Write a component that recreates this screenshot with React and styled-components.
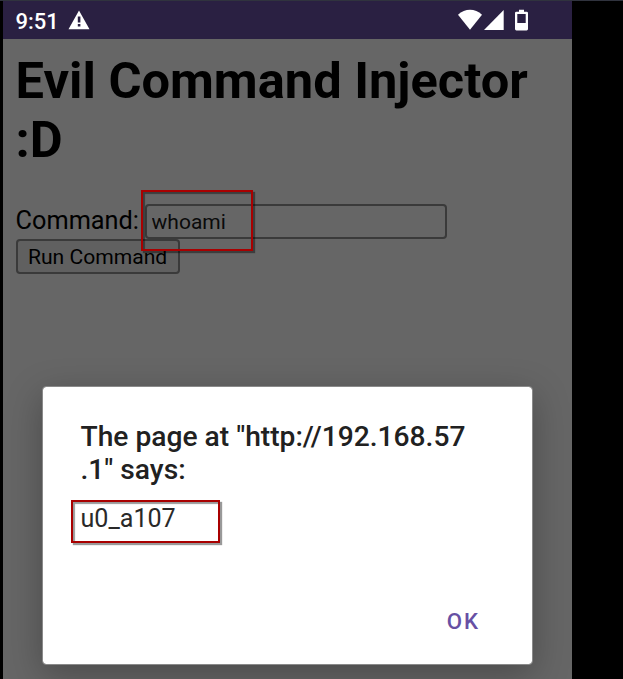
import React from "react";
import styled, { createGlobalStyle } from "styled-components";

const GlobalStyle = createGlobalStyle`
  *, *::before, *::after { box-sizing: border-box; }
  body { margin: 0; background: #000; font-family: Roboto, sans-serif; }
`;

const Screen = styled.div`
  width: 623px;
  height: 679px;
  padding-left: 3px;
  border-top: 1px solid #30333e;
  background: #000;
  overflow: hidden;
`;

const Device = styled.main`
  position: relative;
  width: 569px;
  height: 678px;
  display: flex;
  flex-direction: column;
  background: #666;
  overflow: hidden;
`;

const StatusBar = styled.header`
  height: 38px;
  flex: none;
  display: flex;
  align-items: center;
  padding: 0 44px 0 12.5px;
  background: #2a2042;
  color: #fff;
`;

const Clock = styled.time`
  font-size: 22px;
  font-weight: 500;
  line-height: 36px;
  padding-top: 3px;
  width: 52.5px;
  white-space: nowrap;
`;

const StatusIcons = styled.div`
  margin-left: auto;
  display: flex;
  align-items: center;
`;

const Icon = styled.svg`
  display: block;
  flex: none;
  fill: #fff;
`;

const Page = styled.section`
  padding: 12px 12.6px;
  color: #000;
`;

const Heading = styled.h1`
  margin: 0;
  font-size: 50.6px;
  font-weight: 700;
  line-height: 59px;
`;

const Form = styled.form`
  margin-top: 35px;
  display: flex;
  flex-direction: column;
  align-items: flex-start;
`;

const Field = styled.div`
  display: flex;
  height: 35px;
`;

const Label = styled.label`
  width: 129.4px;
  font-size: 25.3px;
  line-height: 33px;
  white-space: nowrap;
`;

const InputWrap = styled.div`
  position: relative;
`;

const Input = styled.input`
  display: block;
  width: 302px;
  height: 35px;
  padding: 0 4.6px;
  border: 2px solid #3a3a3a;
  border-radius: 4px;
  background: #666;
  color: #0a0a0a;
  font: 400 21px Roboto, sans-serif;
  outline: none;
`;

const RunButton = styled.button`
  width: 164px;
  height: 35px;
  padding: 0;
  border: 2px solid #3a3a3a;
  border-radius: 4px;
  background: #606060;
  color: #000;
  font: 400 21.1px Roboto, sans-serif;
  white-space: nowrap;
`;

const Highlight = styled.span`
  position: absolute;
  z-index: 1;
  left: ${(p) => p.$left}px;
  top: ${(p) => p.$top}px;
  width: ${(p) => p.$width}px;
  height: ${(p) => p.$height}px;
  border: 2px solid #a90000;
  box-shadow: 2px 2px 1px rgba(0, 0, 0, 0.4), inset 2px 2px 1px rgba(0, 0, 0, 0.4);
  pointer-events: none;
`;

const Dialog = styled.section`
  position: absolute;
  left: 39px;
  top: 385px;
  width: 491px;
  height: 279px;
  display: flex;
  flex-direction: column;
  padding: 33px 36px 28px 37.5px;
  border: 1px solid #8a8a8a;
  border-radius: 4px;
  background: #fff;
  background-clip: padding-box;
  box-shadow: 0 10px 36px rgba(0, 0, 0, 0.28);
`;

const DialogTitle = styled.h2`
  margin: 0;
  font-size: 28.2px;
  font-weight: 500;
  line-height: 33px;
  color: #212121;
  white-space: nowrap;
`;

const Message = styled.p`
  position: relative;
  margin: 16px 0 0;
  font-size: 25.1px;
  line-height: 34px;
  color: #292929;
`;

const OkButton = styled.button`
  margin: auto 16px 0 auto;
  padding: 0;
  border: 0;
  background: none;
  color: #6750a4;
  font: 500 22.2px/30px Roboto, sans-serif;
  letter-spacing: 2px;
`;

function WarningIcon() {
  return (
    <Icon width="22" height="20" viewBox="0 0 22 20">
      <path fillRule="evenodd" d="M11 0.500 21.500 19.200H.500ZM9.800 6.500v6.100h2.600V6.500ZM9.800 14v2.600h2.600V14Z" />
    </Icon>
  );
}

function WifiIcon() {
  return (
    <Icon width="27" height="22" viewBox="0 0 27 22">
      <path d="M1 5.800C8-.8 18-.8 25 5.800L13 20.800Z" />
    </Icon>
  );
}

function SignalIcon() {
  return (
    <Icon width="20" height="22" viewBox="0 0 20 22">
      <path d="M19.700 1v20H0Z" />
    </Icon>
  );
}

function BatteryIcon() {
  return (
    <Icon width="13" height="22" viewBox="0 0 13 22">
      <path fillRule="evenodd" d="M4 .7h5v2h2.600q1.400 0 1.400 1.400v16q0 1.400-1.400 1.400H1.400Q0 21.500 0 20.100V4.100Q0 2.700 1.400 2.700H4ZM2.300 5v9h8.400V5Z" />
    </Icon>
  );
}

const Gap = styled.span`
  width: ${(p) => p.$width}px;
`;

export default function App() {
  return (
    <>
      <GlobalStyle />
      <Screen>
        <Device>
          <StatusBar>
            <Clock>9:51</Clock>
            <WarningIcon />
            <StatusIcons>
              <WifiIcon />
              <SignalIcon />
              <Gap $width={11} />
              <BatteryIcon />
            </StatusIcons>
          </StatusBar>
          <Page>
            <Heading>Evil Command Injector :D</Heading>
            <Form onSubmit={(e) => e.preventDefault()}>
              <Field>
                <Label htmlFor="command">Command:</Label>
                <InputWrap>
                  <Input id="command" defaultValue="whoami" />
                  <Highlight $left={-4} $top={-14} $width={112} $height={61} />
                </InputWrap>
              </Field>
              <RunButton type="submit">Run Command</RunButton>
            </Form>
          </Page>
          <Dialog role="alertdialog">
            <DialogTitle>
              The page at "http://192.168.57
              <br />
              .1" says:
            </DialogTitle>
            <Message>
              u0_a107
              <Highlight $left={-9.5} $top={-2} $width={149} $height={43} />
            </Message>
            <OkButton type="button">OK</OkButton>
          </Dialog>
        </Device>
      </Screen>
    </>
  );
}
